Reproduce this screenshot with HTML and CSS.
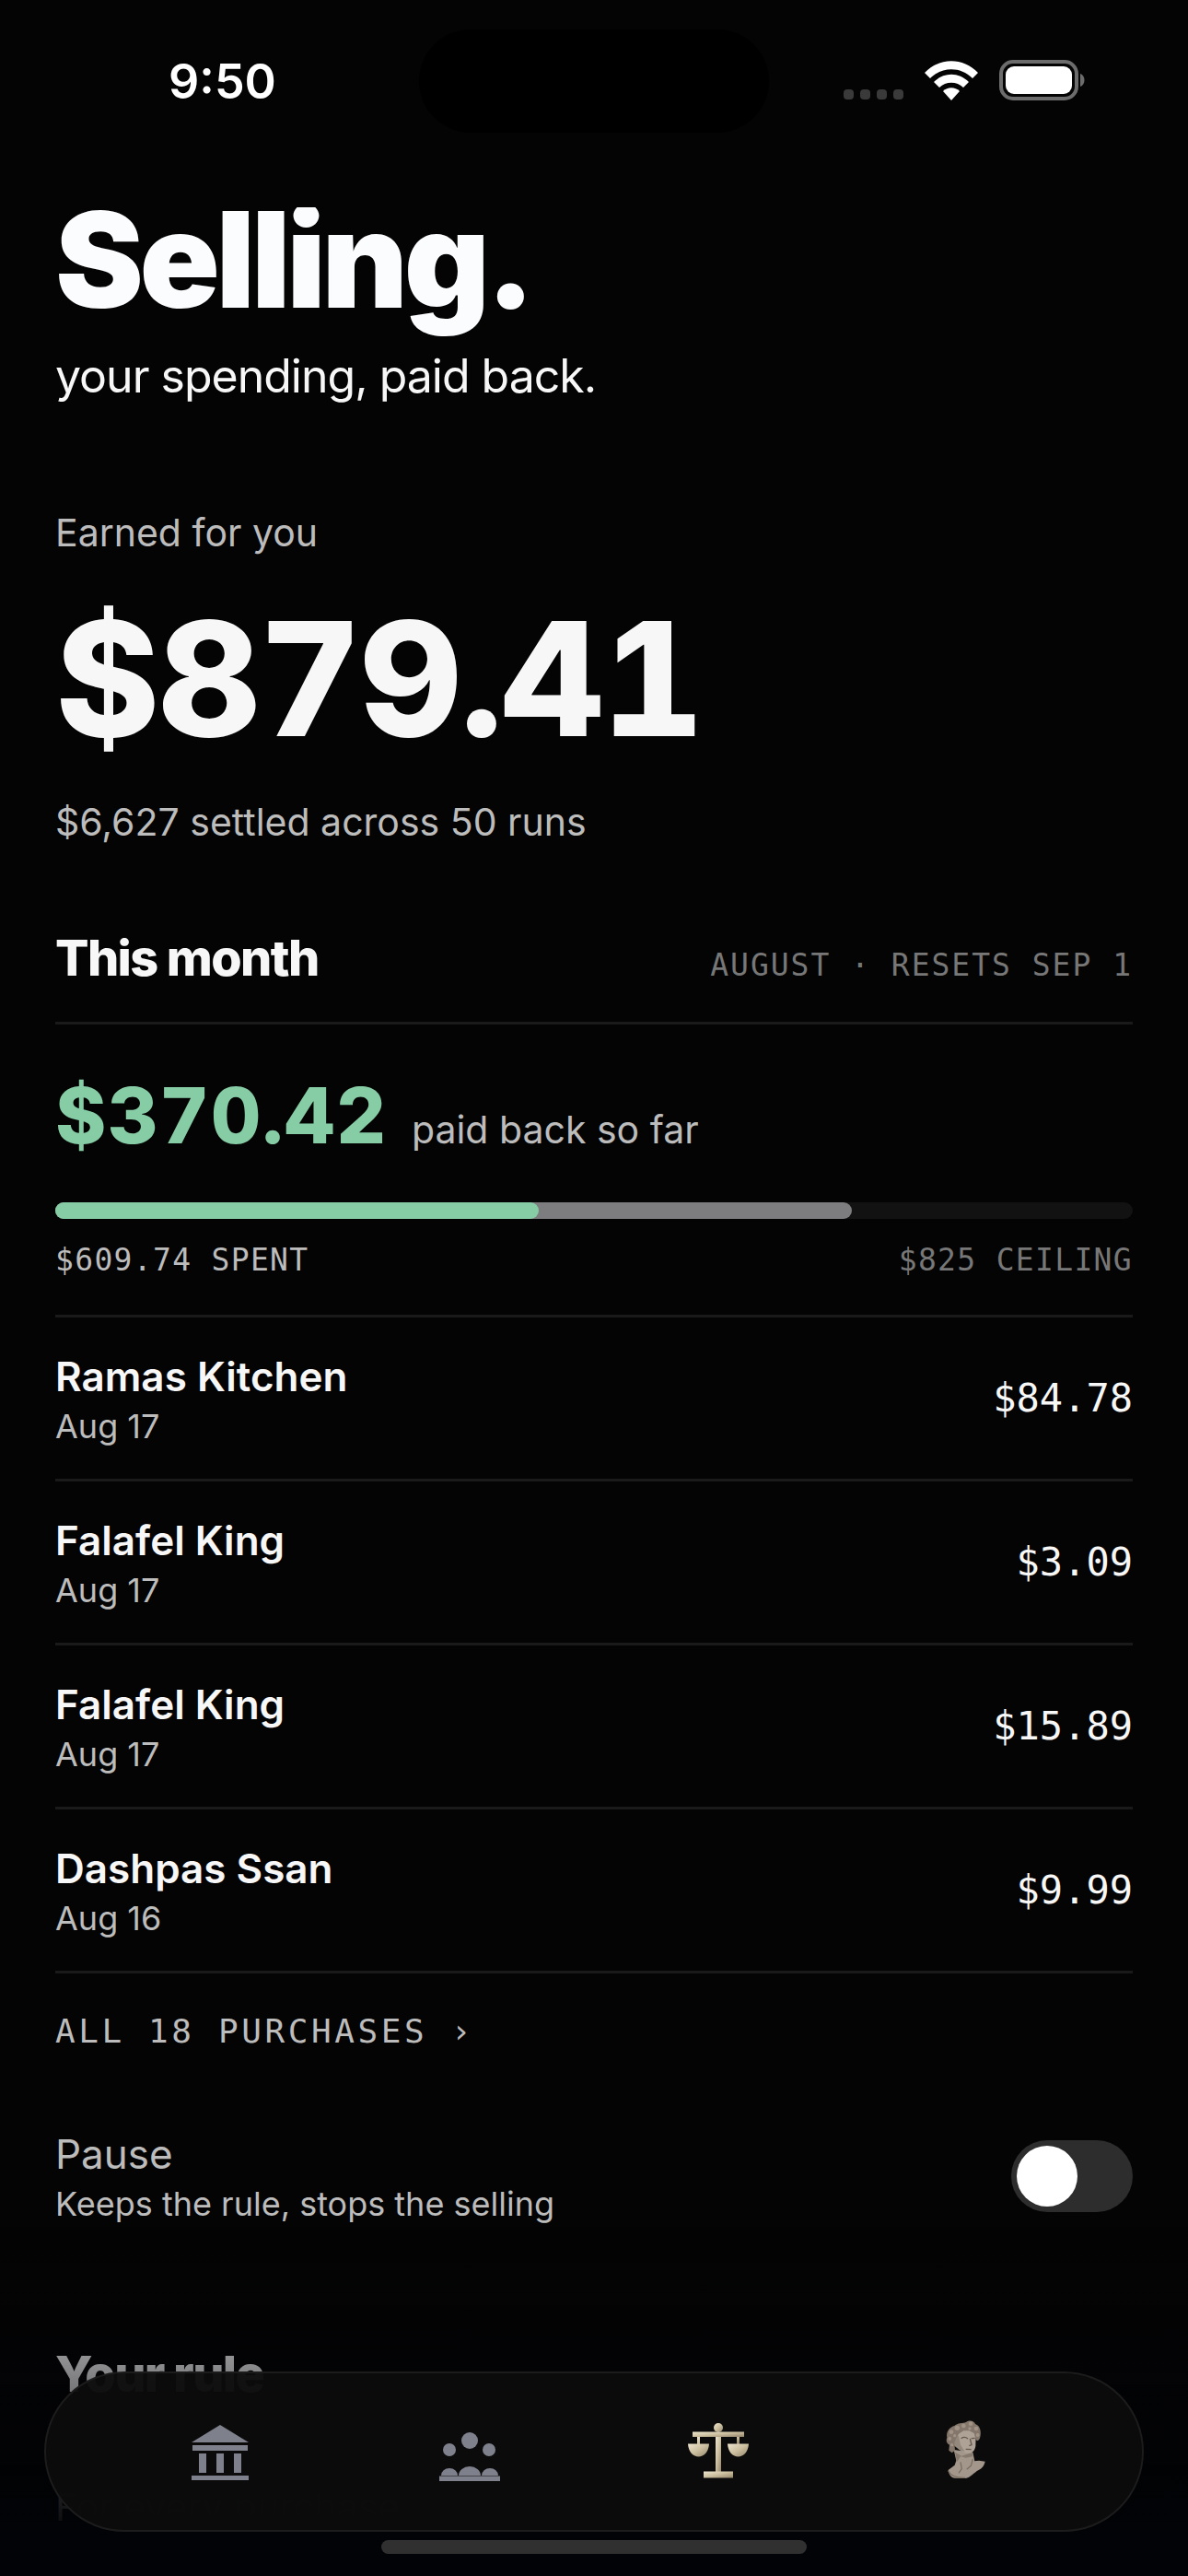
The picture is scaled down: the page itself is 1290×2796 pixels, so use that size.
FILE: index.html
```html
<!DOCTYPE html>
<html lang="en">
<head>
    <meta charset="UTF-8">
    <meta name="viewport" content="width=device-width, initial-scale=1.0">
    <title>Selling</title>
    <link rel="stylesheet" href="styles.css">
</head>
<body>
    <div class="status-bar">
        <div class="status-time">9:50</div>
        <div class="island"></div>
        <div class="status-icons">
            <svg class="cellular" viewBox="0 0 65 12" aria-hidden="true">
                <rect x="0" y="0" width="11" height="11" rx="4"/>
                <rect x="18" y="0" width="11" height="11" rx="4"/>
                <rect x="36" y="0" width="11" height="11" rx="4"/>
                <rect x="54" y="0" width="11" height="11" rx="4"/>
            </svg>
            <svg class="wifi" viewBox="0 0 58 43" aria-hidden="true">
                <path d="M0 13C16 -4 42 -4 58 13L52 19C39 6 19 6 6 19Z"/>
                <path d="M10 23C21 12 37 12 48 23L42 29C35 22 23 22 16 29Z"/>
                <path d="M20 33C25 28 33 28 38 33L29 43Z"/>
            </svg>
            <svg class="battery" viewBox="0 0 94 44" aria-hidden="true">
                <rect x="2" y="2" width="82" height="40" rx="13" fill="none" stroke="#6c6c6c" stroke-width="4"/>
                <rect x="7" y="7" width="72" height="30" rx="9" fill="#fff"/>
                <path d="M88 15C94 17 94 27 88 29Z" fill="#6c6c6c"/>
            </svg>
        </div>
    </div>

    <main class="page">
        <h1 class="title">Selling.</h1>
        <p class="tagline">your spending, paid back.</p>

        <section class="earned">
            <p class="note">Earned for you</p>
            <p class="total">$879.41</p>
            <p class="note">$6,627 settled across 50 runs</p>
        </section>

        <section>
            <div class="section-head">
                <h2>This month</h2>
                <span class="period">AUGUST · RESETS SEP 1</span>
            </div>

            <div class="progress">
                <div class="paid">
                    <strong>$370.42</strong>
                    <span>paid back so far</span>
                </div>
                <div class="bar">
                    <div class="bar-spent" style="width: 73.9%"></div>
                    <div class="bar-paid" style="width: 44.9%"></div>
                </div>
                <div class="bar-labels">
                    <span>$609.74 SPENT</span>
                    <span class="ceiling">$825 CEILING</span>
                </div>
            </div>

            <ul class="purchases">
                <li>
                    <div>
                        <div class="name">Ramas Kitchen</div>
                        <div class="small">Aug 17</div>
                    </div>
                    <div class="amount">$84.78</div>
                </li>
                <li>
                    <div>
                        <div class="name">Falafel King</div>
                        <div class="small">Aug 17</div>
                    </div>
                    <div class="amount">$3.09</div>
                </li>
                <li>
                    <div>
                        <div class="name">Falafel King</div>
                        <div class="small">Aug 17</div>
                    </div>
                    <div class="amount">$15.89</div>
                </li>
                <li>
                    <div>
                        <div class="name">Dashpas Ssan</div>
                        <div class="small">Aug 16</div>
                    </div>
                    <div class="amount">$9.99</div>
                </li>
            </ul>
            <a class="all-link" href="#">ALL 18 PURCHASES ›</a>
        </section>

        <div class="pause">
            <label for="pause">
                <span class="pause-name">Pause</span>
                <span class="small">Keeps the rule, stops the selling</span>
            </label>
            <input class="switch" type="checkbox" role="switch" id="pause">
        </div>

        <section class="rule">
            <h2>Your rule</h2>
            <p class="note">For every purchase</p>
        </section>
    </main>

    <div class="fade"></div>

    <nav class="tabs">
        <a href="#" aria-label="Bank">
            <svg viewBox="0 0 72 72" fill="#7e808c">
                <path d="M36 5L67 24H5Z"/>
                <path d="M6 27H66V33H6ZM13 36H21V57H13ZM32 36H40V57H32ZM51 36H59V57H51ZM5 60H67V65H5Z"/>
            </svg>
        </a>
        <a href="#" aria-label="Community">
            <svg viewBox="0 0 72 72" fill="#7e808c">
                <circle cx="36" cy="22" r="9"/>
                <circle cx="14" cy="32" r="7"/>
                <circle cx="57" cy="32" r="7"/>
                <path d="M5 60A9 8 0 0 1 23 60ZM24 60A12 10 0 0 1 48 60ZM49 60A9 8 0 0 1 67 60Z"/>
                <path d="M3 60.5H69V66H3Z"/>
            </svg>
        </a>
        <a href="#" aria-label="Selling" aria-current="page">
            <svg viewBox="0 0 72 72" fill="url(#gold)">
                <defs>
                    <linearGradient id="gold" x1="0" y1="0" x2="1" y2="1">
                        <stop offset="0" stop-color="#efe6cf"/>
                        <stop offset=".5" stop-color="#cbbf9f"/>
                        <stop offset="1" stop-color="#94866c"/>
                    </linearGradient>
                </defs>
                <circle cx="36" cy="8" r="5"/>
                <path d="M8 12.5H64V18H8Z"/>
                <path d="M33 18H39V56H33Z"/>
                <path d="M20 55.5H52V62.5H20Z"/>
                <path d="M13 18H16V26H13ZM56 18H59V26H56Z"/>
                <path d="M3 25.5H26C25 44 4 44 3 25.5Z"/>
                <path d="M46 25.5H69C68 44 47 44 46 25.5Z"/>
            </svg>
        </a>
        <a href="#" aria-label="Profile">
            <svg viewBox="0 24 216 216">
                <!-- neck and shoulders -->
                <path fill="#a3978c" d="M62 120L70 155L65 170L44 186C46 202 54 211 66 212L100 213C116 211 128 194 143 186C154 180 161 172 164 158L144 155L130 157L124 128Z"/>
                <path fill="#867a6e" d="M66 128L88 140L112 132L122 130L124 142L102 146L84 142L72 160Z"/>
                <path fill="none" stroke="#7b6e62" stroke-width="4" d="M84 160L88 182L78 196M124 150L118 172L104 184M44 188C52 206 70 212 100 211"/>
                <!-- face -->
                <path fill="#aea296" d="M64 66L92 50L124 54L134 72L133 108C131 122 122 132 110 131C94 130 78 120 66 104Z"/>
                <path fill="#94877b" d="M64 72L78 74L84 104L98 126L80 120L62 106Z"/>
                <path fill="none" stroke="#65594f" stroke-width="4" d="M86 83C94 77 102 79 108 84M119 83L131 82M115 84L120 104L112 107M101 118L119 119"/>
                <!-- curls -->
                <path fill="#84766a" d="M40 80C36 62 48 46 64 42C74 32 92 34 102 30C114 22 128 26 132 36C148 42 152 60 148 78C146 88 140 94 134 88L128 66L112 58L94 58L78 68L70 82L64 96L66 122L56 130L46 122L48 104C38 98 36 90 40 80Z"/>
                <g fill="#a09386">
                    <circle cx="54" cy="62" r="7"/>
                    <circle cx="73" cy="49" r="8"/>
                    <circle cx="94" cy="42" r="7"/>
                    <circle cx="117" cy="35" r="7"/>
                    <circle cx="135" cy="51" r="7"/>
                    <circle cx="114" cy="51" r="5"/>
                    <circle cx="140" cy="72" r="6"/>
                    <circle cx="49" cy="84" r="6"/>
                    <circle cx="65" cy="74" r="5"/>
                    <circle cx="56" cy="104" r="5"/>
                </g>
            </svg>
        </a>
    </nav>
    <div class="home-indicator"></div>
</body>
</html>
```

FILE: styles.css
```css
* {
    box-sizing: border-box;
}
body {
    margin: 0;
    min-height: 100vh;
    background: #040404;
    color: #f7f7f7;
    font-family: Inter, sans-serif;
    font-size: 41px;
    overflow: hidden;
}
h1, h2, p, ul {
    margin: 0;
    padding: 0;
}
a {
    color: inherit;
    text-decoration: none;
}

/* Status bar */
.status-bar {
    display: grid;
    grid-template-columns: 1fr 380px 1fr;
    align-items: center;
    height: 176px;
}
.status-time {
    padding-left: 28px;
    text-align: center;
    color: #fff;
    font-size: 52px;
    font-weight: 600;
}
.island {
    height: 112px;
    border-radius: 56px;
    background: #000;
}
.status-icons {
    display: flex;
    align-items: flex-end;
    gap: 23px;
    padding: 0 0 2px 81px;
}
.cellular {
    width: 65px;
    height: 12px;
    fill: #3a3a3a;
}
.wifi {
    width: 58px;
    height: 43px;
    fill: #fff;
}
.battery {
    width: 94px;
    height: 44px;
}

/* Content */
.page {
    padding: 0 60px;
}
.title {
    margin-top: 49px;
    padding-bottom: 34px;
    overflow: hidden;
    color: #fbfcfe;
    font-size: 144px;
    line-height: 114px;
    font-weight: 900;
    letter-spacing: -0.03em;
}
.tagline {
    margin-top: 4px;
    font-size: 50px;
    line-height: 62px;
    letter-spacing: -0.02em;
}
.earned {
    margin-top: 112px;
}
.note {
    color: #bcbcbc;
    line-height: 54px;
}
.total {
    margin: 26px 0 24px;
    font-size: 172px;
    line-height: 210px;
    font-weight: 800;
    font-variant-numeric: tabular-nums;
    letter-spacing: -0.01em;
}
h2 {
    font-size: 54px;
    line-height: 66px;
    font-weight: 800;
    letter-spacing: -0.03em;
}
.section-head {
    display: flex;
    justify-content: space-between;
    align-items: baseline;
    margin-top: 88px;
    padding-bottom: 36px;
    border-bottom: 3px solid #1a1a1a;
}
.period,
.bar-labels,
.amount,
.all-link {
    font-family: "DejaVu Sans Mono", monospace;
}
.period {
    color: #777;
    font-size: 33px;
    letter-spacing: 0.06em;
}
.progress {
    padding: 48px 0 38px;
    border-bottom: 3px solid #1a1a1a;
}
.paid {
    display: flex;
    align-items: baseline;
    gap: 26px;
    line-height: 102px;
    color: #bcbcbc;
}
.paid strong {
    color: #86cda6;
    font-size: 84px;
    font-weight: 800;
    font-variant-numeric: tabular-nums;
    letter-spacing: 0.02em;
}
.bar {
    position: relative;
    height: 18px;
    margin-top: 28px;
    border-radius: 9px;
    background: #121212;
}
.bar-spent,
.bar-paid {
    position: absolute;
    top: 0;
    left: 0;
    height: 100%;
    border-radius: 9px;
}
.bar-spent {
    background: #7d7c7e;
}
.bar-paid {
    background: #86cda6;
}
.bar-labels {
    display: flex;
    justify-content: space-between;
    margin-top: 24px;
    color: #bcbcbc;
    font-size: 33px;
    line-height: 42px;
    letter-spacing: 0.04em;
}
.ceiling {
    color: #777;
}

.purchases {
    list-style: none;
}
.purchases li {
    display: flex;
    justify-content: space-between;
    align-items: center;
    height: 178px;
    border-bottom: 3px solid #1a1a1a;
}
.name {
    font-size: 44px;
    line-height: 60px;
    font-weight: 600;
}
.small {
    color: #bcbcbc;
    font-size: 36px;
    line-height: 48px;
}
.amount {
    font-size: 42px;
}
.all-link {
    display: block;
    margin-top: 42px;
    color: #bcbcbc;
    font-size: 36px;
    line-height: 42px;
    letter-spacing: 0.1em;
}

.pause {
    display: flex;
    justify-content: space-between;
    align-items: center;
    margin-top: 82px;
}
.pause label {
    display: flex;
    flex-direction: column;
}
.pause-name {
    color: #bcbcbc;
    font-size: 44px;
    line-height: 60px;
}
.switch {
    appearance: none;
    display: flex;
    width: 132px;
    height: 78px;
    margin: 0;
    padding: 6px;
    border-radius: 39px;
    background: #2d2d2d;
}
.switch::before {
    content: "";
    width: 66px;
    height: 66px;
    border-radius: 50%;
    background: #fff;
}
.switch:checked {
    justify-content: flex-end;
    background: #86cda6;
}

.rule {
    margin-top: 128px;
}
.rule .note {
    margin-top: 84px;
}

/* Bottom tabs */
.fade {
    position: fixed;
    right: 0;
    bottom: 0;
    left: 0;
    height: 380px;
    background: linear-gradient(transparent, #020306 90%);
    pointer-events: none;
}
.tabs {
    position: fixed;
    right: 48px;
    bottom: 48px;
    left: 48px;
    display: flex;
    height: 174px;
    padding: 4px 54px 0;
    border: 2px solid #1c1c1c;
    border-radius: 87px;
    background: rgba(12, 12, 12, 0.95);
}
.tabs a {
    flex: 1;
    display: flex;
    align-items: center;
    justify-content: center;
}
.tabs svg {
    width: 72px;
    height: 72px;
}
.home-indicator {
    position: fixed;
    bottom: 24px;
    left: 50%;
    width: 462px;
    height: 15px;
    border-radius: 8px;
    background: #303030;
    transform: translateX(-50%);
}
```
